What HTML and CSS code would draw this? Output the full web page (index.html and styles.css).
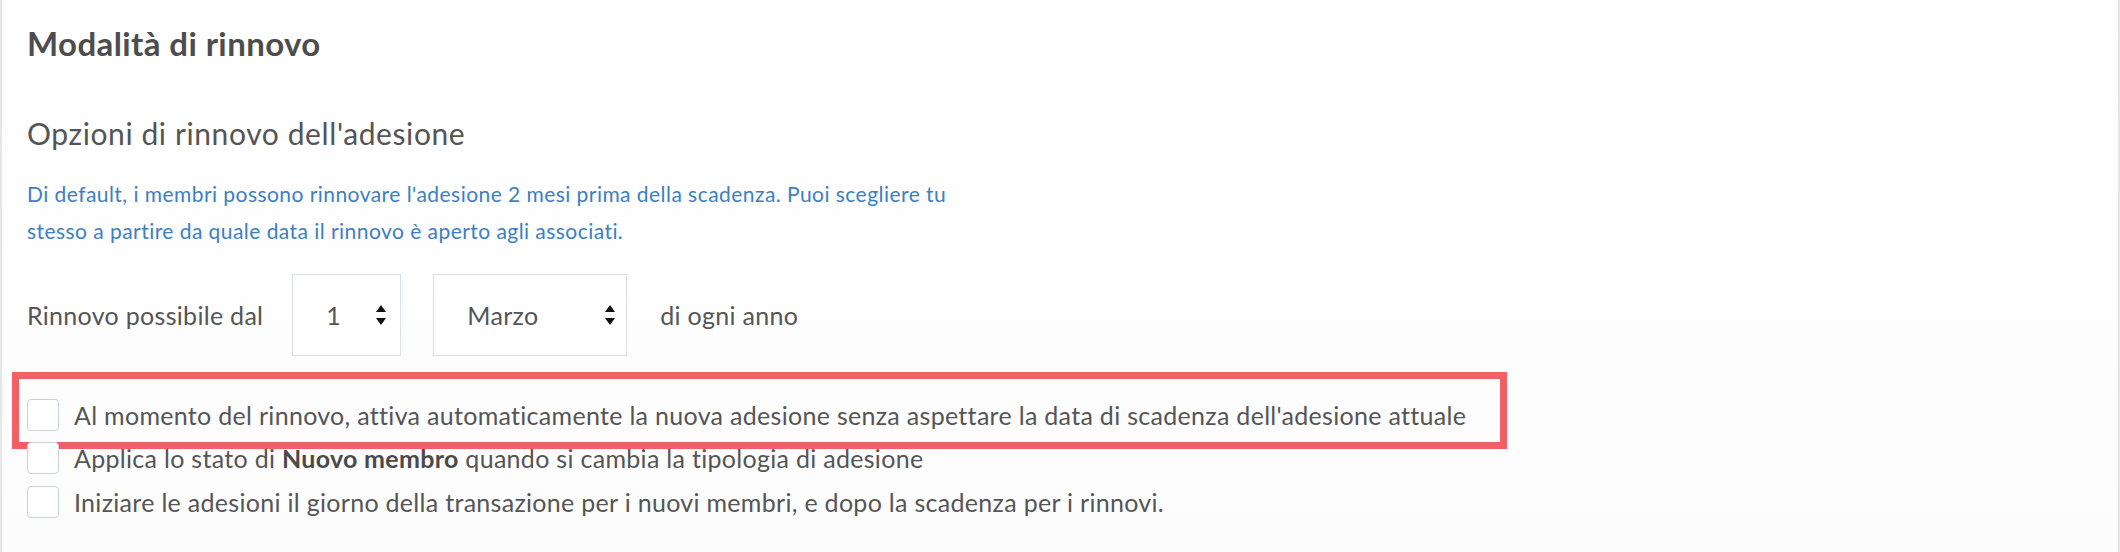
FILE: index.html
```html
<!DOCTYPE html>
<html lang="it">
<head>
<meta charset="utf-8">
<title>Modalità di rinnovo</title>
<link rel="stylesheet" href="styles.css">
</head>
<body>
<div class="panel">
  <h2 class="panel-title">Modalità di rinnovo</h2>
  <h3 class="section-title">Opzioni di rinnovo dell'adesione</h3>
  <p class="hint">Di default, i membri possono rinnovare l'adesione 2 mesi prima della scadenza. Puoi scegliere tu stesso a partire da quale data il rinnovo è aperto agli associati.</p>
  <div class="renew-row">
    <span class="row-label first">Rinnovo possibile dal</span>
    <div class="select select-day">
      <span class="select-value">1</span>
      <svg class="select-arrows" width="10" height="20" viewBox="0 0 10 20"><path d="M0 7 L5 0 L10 7 Z M0 13 L10 13 L5 20 Z" fill="#111"/></svg>
    </div>
    <div class="select select-month">
      <span class="select-value">Marzo</span>
      <svg class="select-arrows" width="10" height="20" viewBox="0 0 10 20"><path d="M0 7 L5 0 L10 7 Z M0 13 L10 13 L5 20 Z" fill="#111"/></svg>
    </div>
    <span class="row-label last">di ogni anno</span>
  </div>
  <ul class="options">
    <li class="option">
      <span class="checkbox"></span>
      <span class="option-text">Al momento del rinnovo, attiva automaticamente la nuova adesione senza aspettare la data di scadenza dell'adesione attuale</span>
      <span class="annotation"></span>
    </li>
    <li class="option">
      <span class="checkbox"></span>
      <span class="option-text">Applica lo stato di <strong>Nuovo membro</strong> quando si cambia la tipologia di adesione</span>
    </li>
    <li class="option">
      <span class="checkbox"></span>
      <span class="option-text">Iniziare le adesioni il giorno della transazione per i nuovi membri, e dopo la scadenza per i rinnovi.</span>
    </li>
  </ul>
</div>
</body>
</html>
```
FILE: styles.css
```css
html, body {
  margin: 0;
  padding: 0;
  background: #ffffff;
}

body {
  font-family: Lato, "Open Sans", sans-serif;
  color: #555555;
}

.panel {
  box-sizing: border-box;
  height: 552px;
  padding: 23px 0 0 25px;
  border-left: 2px solid #e6e6e6;
  border-right: 2px solid #e6e6e6;
  background: linear-gradient(#ffffff, #fcfcfc);
}

.panel-title {
  margin: 0;
  font-size: 33px;
  line-height: 40px;
  font-weight: 700;
  letter-spacing: 0.4px;
  color: #4d4d4d;
}

.section-title {
  margin: 52px 0 0;
  font-size: 30px;
  line-height: 36px;
  font-weight: 400;
  letter-spacing: 0.6px;
  color: #555555;
}

.hint {
  margin: 24px 0 0;
  max-width: 950px;
  font-size: 21px;
  line-height: 37px;
  letter-spacing: 0.45px;
  color: #3c7fc2;
}

.renew-row {
  margin-top: 25px;
  display: flex;
  align-items: center;
  font-size: 25px;
  letter-spacing: 0.3px;
}

.row-label.first {
  margin-right: 29px;
}

.row-label.last {
  margin-left: 33px;
}

.select + .select {
  margin-left: 32px;
}

.select {
  box-sizing: border-box;
  height: 82px;
  display: flex;
  align-items: center;
  justify-content: space-between;
  border: 1px solid #d9dfe8;
  background: #ffffff;
  color: #555555;
}

.select-day {
  width: 109px;
  padding: 0 14px 0 33px;
}

.select-month {
  width: 194px;
  padding: 0 11px 0 33px;
}

.select-arrows {
  display: block;
}

.options {
  list-style: none;
  margin: 37px 0 0;
  padding: 0;
  font-size: 25px;
  letter-spacing: 0.3px;
}

.option {
  position: relative;
  height: 43.5px;
  display: flex;
  align-items: center;
  gap: 15px;
}

.checkbox {
  box-sizing: border-box;
  flex: none;
  width: 32px;
  height: 32px;
  border: 1px solid #c8d1de;
  border-radius: 4px;
  background: #ffffff;
}

.option-text strong {
  font-weight: 700;
  color: #4a4a4a;
}

.annotation {
  position: absolute;
  box-sizing: border-box;
  top: -21px;
  left: -15px;
  width: 1495px;
  height: 77px;
  border: 7px solid #f06065;
  pointer-events: none;
}
```
